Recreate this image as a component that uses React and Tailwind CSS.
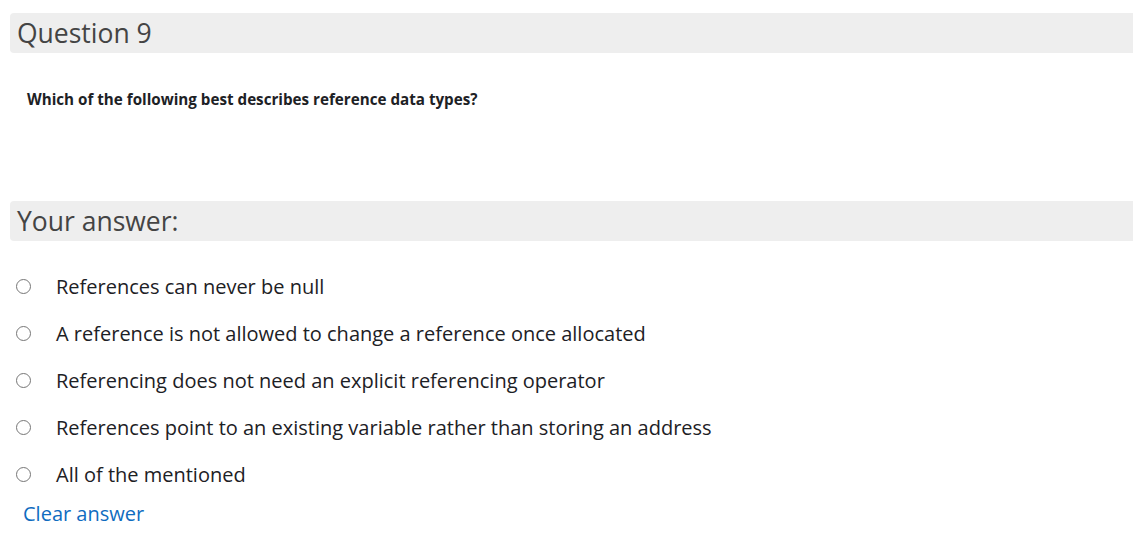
const options = [
    'References can never be null',
    'A reference is not allowed to change a reference once allocated',
    'Referencing does not need an explicit referencing operator',
    'References point to an existing variable rather than storing an address',
    'All of the mentioned',
];

export default function App() {
    return (
        <main
            className="min-h-screen bg-white pt-[13px] pl-[10px] text-[#1d2125]"
            style={{ fontFamily: '"Open Sans", "Liberation Sans", sans-serif' }}
        >
            <div className="flex h-[40px] items-center rounded-l-[4px] bg-[#eeeeee] pl-[7px]">
                <h2 className="text-[26.5px] leading-none text-[#444]">Question 9</h2>
            </div>

            <p className="mt-[36px] pl-[17px] text-[15.2px] font-bold leading-[20px] text-[#1d2125]">
                Which of the following best describes reference data types?
            </p>

            <div className="mt-[92px] flex h-[40px] items-center rounded-l-[4px] bg-[#eeeeee] pl-[7px]">
                <h3 className="text-[26.5px] leading-none text-[#444]">Your answer:</h3>
            </div>

            <div className="mt-[22px] flex flex-col">
                {options.map((text) => (
                    <label
                        key={text}
                        className="flex h-[47px] items-center text-[20px] text-[#1d2125]"
                    >
                        <span className="ml-[6px] h-[15px] w-[15px] shrink-0 rounded-full border border-[#767676] bg-white" />
                        <span className="ml-[25px]">{text}</span>
                    </label>
                ))}
            </div>

            <a href="#" className="ml-[13px] mt-[2px] block text-[20px] leading-[28px] text-[#0f6cbf]">
                Clear answer
            </a>
        </main>
    );
}
